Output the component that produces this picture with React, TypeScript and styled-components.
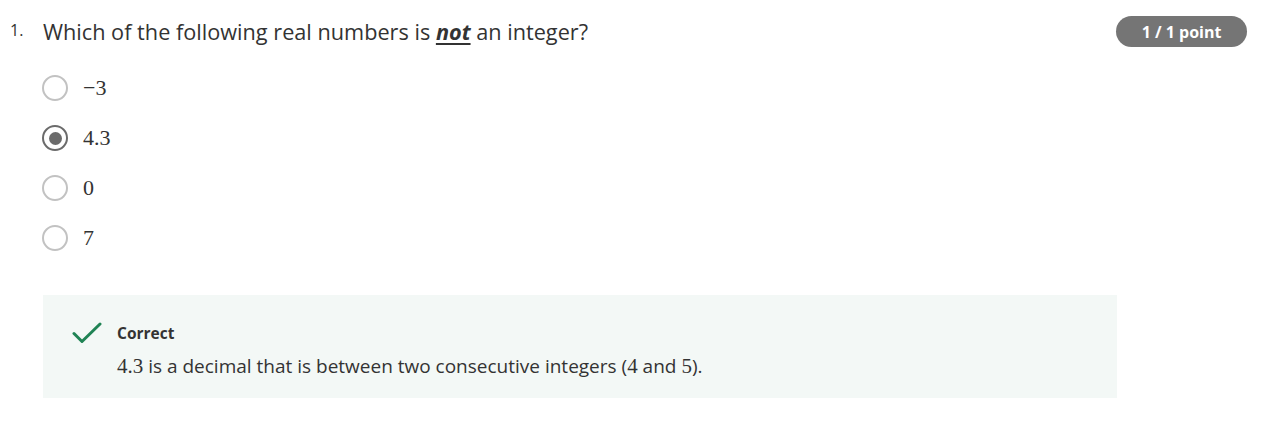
import styled, { createGlobalStyle } from 'styled-components'

const GlobalStyle = createGlobalStyle`
	html, body {
		margin: 0;
		padding: 0;
		background: #fff;
	}
	body {
		font-family: 'Open Sans', 'Noto Sans', sans-serif;
		color: #1f1f1f;
	}
`

const options = [
	{ label: '\u22123', checked: false },
	{ label: '4.3', checked: true },
	{ label: '0', checked: false },
	{ label: '7', checked: false },
]

// quiz question with its graded feedback
export default function App(): JSX.Element {
	return (
		<>
			<GlobalStyle />
			<Question>
				<Header>
					<Number>1.</Number>
					<Prompt>
						Which of the following real numbers is <Emph>not</Emph> an integer?
					</Prompt>
					<Badge>1 / 1 point</Badge>
				</Header>
				<Options>
					{options.map((o) => (
						<Option key={o.label}>
							<Radio checked={o.checked} />
							<MathText>{o.label}</MathText>
						</Option>
					))}
				</Options>
				<Feedback>
					<CheckIcon viewBox="0 0 30 22" aria-hidden>
						<path d="M2 11.5 L10 19.5 L28 2" fill="none" stroke="#1f8354" strokeWidth="3" strokeLinecap="round" strokeLinejoin="round" />
					</CheckIcon>
					<FeedbackBody>
						<FeedbackTitle>Correct</FeedbackTitle>
						<FeedbackText>
							<MathInline>4.3</MathInline> is a decimal that is between two consecutive integers (
							<MathInline>4</MathInline> and <MathInline>5</MathInline>).
						</FeedbackText>
					</FeedbackBody>
				</Feedback>
			</Question>
		</>
	)
}

const Question = styled.div`
	padding: 16px 21px 0 10px;
	width: 1268px;
	box-sizing: border-box;
`
const Header = styled.div`
	display: flex;
	align-items: flex-start;
`
const Number = styled.span`
	width: 33px;
	font-size: 16px;
	line-height: 28px;
	color: #333;
`
const Prompt = styled.div`
	flex: 1;
	font-size: 21.7px;
	line-height: 32px;
	color: #333;
`
const Emph = styled.span`
	font-weight: 700;
	font-style: italic;
	text-decoration: underline;
	text-underline-offset: 3px;
	text-decoration-thickness: 2px;
`
const Badge = styled.div`
	height: 31px;
	width: 131px;
	border-radius: 16px;
	background: #757575;
	color: #fff;
	font-weight: 700;
	font-size: 16px;
	display: flex;
	align-items: center;
	justify-content: center;
`
const Options = styled.div`
	display: flex;
	flex-direction: column;
	gap: 24px;
	padding: 27px 0 0 32px;
`
const Option = styled.label`
	display: flex;
	align-items: center;
	gap: 15px;
	height: 26px;
`
const Radio = styled.span<{ checked: boolean }>`
	box-sizing: border-box;
	width: 26px;
	height: 26px;
	border-radius: 50%;
	border: 2.5px solid ${({ checked }) => (checked ? '#6b6b6b' : '#c2c2c2')};
	display: flex;
	align-items: center;
	justify-content: center;
	&::after {
		content: '';
		display: ${({ checked }) => (checked ? 'block' : 'none')};
		width: 13px;
		height: 13px;
		border-radius: 50%;
		background: #6b6b6b;
	}
`
const MathText = styled.span`
	font-family: 'Liberation Serif', 'DejaVu Serif', serif;
	font-size: 22px;
	color: #333;
`
const Feedback = styled.div`
	margin: 44px 130px 0 33px;
	background: #f3f8f6;
	height: 103px;
	box-sizing: border-box;
	display: flex;
	align-items: flex-start;
	padding: 25px 0 0 29px;
	gap: 15px;
`
const CheckIcon = styled.svg`
	width: 30px;
	height: 22px;
	margin-top: 2px;
`
const FeedbackBody = styled.div`
	display: flex;
	flex-direction: column;
	gap: 10px;
	padding-top: 3px;
`
const FeedbackTitle = styled.div`
	font-size: 15.5px;
	font-weight: 700;
	color: #333;
	line-height: 20px;
`
const FeedbackText = styled.div`
	font-size: 19px;
	color: #333;
	line-height: 26px;
`
const MathInline = styled.span`
	font-family: 'Liberation Serif', 'DejaVu Serif', serif;
	font-size: 21px;
`
